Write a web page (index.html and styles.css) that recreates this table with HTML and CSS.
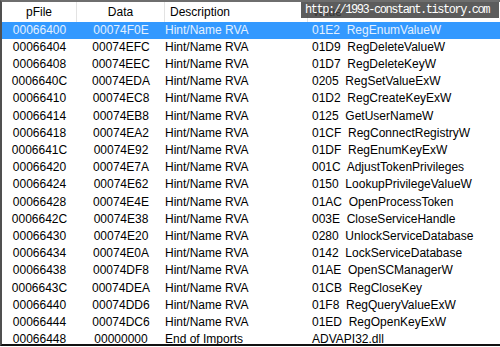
FILE: index.html
```html
<!DOCTYPE html>
<html>
<head>
<meta charset="utf-8">
<link rel="stylesheet" href="styles.css">
</head>
<body>
<div class="list">
  <div class="head">
    <div class="hc c1">pFile</div>
    <div class="hc c2">Data</div>
    <div class="hc c3">Description</div>
    <div class="hc c4">Value</div>
  </div>
  <div class="rows">
    <div class="row sel"><div class="c1">00066400</div><div class="c2">00074F0E</div><div class="c3">Hint/Name RVA</div><div class="c4">01E2  RegEnumValueW</div></div>
    <div class="row"><div class="c1">00066404</div><div class="c2">00074EFC</div><div class="c3">Hint/Name RVA</div><div class="c4">01D9  RegDeleteValueW</div></div>
    <div class="row"><div class="c1">00066408</div><div class="c2">00074EEC</div><div class="c3">Hint/Name RVA</div><div class="c4">01D7  RegDeleteKeyW</div></div>
    <div class="row"><div class="c1">0006640C</div><div class="c2">00074EDA</div><div class="c3">Hint/Name RVA</div><div class="c4">0205  RegSetValueExW</div></div>
    <div class="row"><div class="c1">00066410</div><div class="c2">00074EC8</div><div class="c3">Hint/Name RVA</div><div class="c4">01D2  RegCreateKeyExW</div></div>
    <div class="row"><div class="c1">00066414</div><div class="c2">00074EB8</div><div class="c3">Hint/Name RVA</div><div class="c4">0125  GetUserNameW</div></div>
    <div class="row"><div class="c1">00066418</div><div class="c2">00074EA2</div><div class="c3">Hint/Name RVA</div><div class="c4">01CF  RegConnectRegistryW</div></div>
    <div class="row"><div class="c1">0006641C</div><div class="c2">00074E92</div><div class="c3">Hint/Name RVA</div><div class="c4">01DF  RegEnumKeyExW</div></div>
    <div class="row"><div class="c1">00066420</div><div class="c2">00074E7A</div><div class="c3">Hint/Name RVA</div><div class="c4">001C  AdjustTokenPrivileges</div></div>
    <div class="row"><div class="c1">00066424</div><div class="c2">00074E62</div><div class="c3">Hint/Name RVA</div><div class="c4">0150  LookupPrivilegeValueW</div></div>
    <div class="row"><div class="c1">00066428</div><div class="c2">00074E4E</div><div class="c3">Hint/Name RVA</div><div class="c4">01AC  OpenProcessToken</div></div>
    <div class="row"><div class="c1">0006642C</div><div class="c2">00074E38</div><div class="c3">Hint/Name RVA</div><div class="c4">003E  CloseServiceHandle</div></div>
    <div class="row"><div class="c1">00066430</div><div class="c2">00074E20</div><div class="c3">Hint/Name RVA</div><div class="c4">0280  UnlockServiceDatabase</div></div>
    <div class="row"><div class="c1">00066434</div><div class="c2">00074E0A</div><div class="c3">Hint/Name RVA</div><div class="c4">0142  LockServiceDatabase</div></div>
    <div class="row"><div class="c1">00066438</div><div class="c2">00074DF8</div><div class="c3">Hint/Name RVA</div><div class="c4">01AE  OpenSCManagerW</div></div>
    <div class="row"><div class="c1">0006643C</div><div class="c2">00074DEA</div><div class="c3">Hint/Name RVA</div><div class="c4">01CB  RegCloseKey</div></div>
    <div class="row"><div class="c1">00066440</div><div class="c2">00074DD6</div><div class="c3">Hint/Name RVA</div><div class="c4">01F8  RegQueryValueExW</div></div>
    <div class="row"><div class="c1">00066444</div><div class="c2">00074DC6</div><div class="c3">Hint/Name RVA</div><div class="c4">01ED  RegOpenKeyExW</div></div>
    <div class="row"><div class="c1">00066448</div><div class="c2">00000000</div><div class="c3">End of Imports</div><div class="c4">ADVAPI32.dll</div></div>
  </div>
  <div class="mark">http://1993-constant.tistory.com</div>
</div>
</body>
</html>
```
FILE: styles.css
```css
html, body {
  margin: 0;
  padding: 0;
  background: #fff;
}
.list {
  position: relative;
  width: 500px;
  height: 346px;
  box-sizing: border-box;
  border-top: 2px solid #6e6e6e;
  border-left: 2px solid #505050;
  border-bottom: 2px solid #111;
  overflow: hidden;
  font-family: "Liberation Sans", Arial, sans-serif;
  font-size: 12px;
  color: #000;
  background: #fff;
}
.head {
  display: grid;
  grid-template-columns: 75px 88px 143px 1fr;
  height: 19.7px;
  background: #fff;
}
.hc {
  padding-top: 2px;
  line-height: 17.7px;
  border-right: 1px solid #e3e3e3;
  white-space: nowrap;
}
.head .c1, .head .c2 { text-align: center; }
.head .c3 { padding-left: 5px; }
.head .c4 { padding-left: 4px; border-right: none; }
.rows { display: flex; flex-direction: column; }
.row {
  display: grid;
  grid-template-columns: 75px 88px 143px 1fr;
  height: 17.2px;
  line-height: 17.2px;
  white-space: pre;
  flex: none;
}
.row .c1, .row .c2 { text-align: center; }
.row .c3 { padding-left: 0; }
.row .c4 { padding-left: 4px; }
.row.sel {
  background: #3399ff;
  color: #e2f0ff;
}
.mark {
  position: absolute;
  left: 299px;
  top: 0;
  width: 198px;
  height: 16px;
  background: rgba(64, 64, 64, 0.85);
  color: #fff;
  font-family: "Liberation Mono", monospace;
  font-size: 12px;
  letter-spacing: -1.45px;
  line-height: 16px;
  padding-left: 4px;
  box-sizing: border-box;
  white-space: nowrap;
}
```
